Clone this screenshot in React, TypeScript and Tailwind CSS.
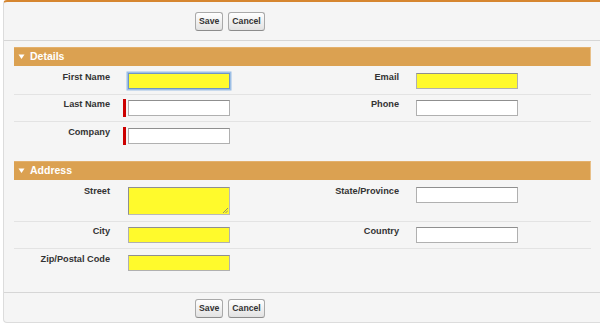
import React from "react";

const font = { fontFamily: '"Liberation Sans", Arial, sans-serif' };

function Btn({ label }: { label: string }) {
  return (
    <button className="h-[19px] px-[3px] rounded-[3px] border border-[#a9a9a9] border-b-[#8c8c8c] bg-gradient-to-b from-white to-[#e2e2e2] text-[8.7px] font-bold text-[#333] leading-none">
      {label}
    </button>
  );
}

function ButtonBar({ top }: { top?: boolean }) {
  return (
    <div
      className={
        top
          ? "flex gap-[5px] pl-[191px] pt-[10px] pb-[9px] border-b border-[#d6d6d6]"
          : "flex gap-[5px] pl-[191px] pt-[6px] pb-[4px] border-t border-[#d6d6d6]"
      }
    >
      <Btn label="Save" />
      <Btn label="Cancel" />
    </div>
  );
}

function SectionHeader({ title }: { title: string }) {
  return (
    <div className="h-[19px] flex items-center gap-[5px] pl-[4px] bg-[#dba151] border-t border-[#e3b06c] border-r border-r-[#e8c08a]">
      <svg width="7" height="6" viewBox="0 0 7 6">
        <path d="M0.5 0.5 L6.5 0.5 L3.5 5 Z" fill="#fff" />
      </svg>
      <span className="text-[10.5px] font-bold text-white">{title}</span>
    </div>
  );
}

type Field = {
  label: string;
  yellow?: boolean;
  required?: boolean;
  focused?: boolean;
  textarea?: boolean;
};

function Input({ f }: { f: Field }) {
  if (f.textarea) {
    return (
      <div className="relative w-[102px] h-[28px] bg-[#fffa2c] border border-[#8f8f8f] border-b-[#b9b9b9] border-r-[#b9b9b9]">
        <svg className="absolute right-[1px] bottom-[1px]" width="6" height="6" viewBox="0 0 6 6">
          <path d="M1 6 L6 1 M3.5 6 L6 3.5" stroke="#777" strokeWidth="0.8" />
        </svg>
      </div>
    );
  }
  return (
    <div
      className={
        "w-[102px] h-[16px] border " +
        (f.yellow ? "bg-[#fffa2c] " : "bg-white ") +
        (f.focused
          ? "border-[#6f95c4] shadow-[0_0_0_1.5px_#9dbfe6]"
          : "border-[#b0b0b0] border-t-[#8f8f8f]")
      }
    />
  );
}

function Cells({ f, right }: { f?: Field; right?: boolean }) {
  if (!f) return <><div /><div /></>;
  return (
    <>
      <div
        className={
          "mt-[-1px] text-right text-[9.2px] font-bold text-[#333] leading-[11px] " +
          (right ? "pr-[7px]" : "pr-[8px]")
        }
      >
        {f.label}
      </div>
      <div className="relative pl-[10px]">
        {f.required && (
          <div className="absolute left-[5px] top-[-1px] w-[3px] h-[18px] bg-[#c00]" />
        )}
        <Input f={f} />
      </div>
    </>
  );
}

function Row({ left, right, pt, pb, last }: { left?: Field; right?: Field; pt: string; pb: string; last?: boolean }) {
  return (
    <div
      className={
        "grid grid-cols-[104px_186px_102px_185px] items-start " +
        pt + " " + pb + (last ? "" : " border-b border-[#e3e3e3]")
      }
    >
      <Cells f={left} />
      <Cells f={right} right />
    </div>
  );
}

export default function App() {
  return (
    <div className="bg-white w-[600px] h-[323px] overflow-hidden" style={font}>
      <div className="ml-[3px] w-[610px] h-[323px] bg-[#f5f5f5] border-t-2 border-t-[#d6862f] border-l border-b border-[#dcdcdc] rounded-[4px]">
        <ButtonBar top />

        <div className="ml-[10px] w-[577px]">
          <div className="mt-[6px]">
            <SectionHeader title="Details" />
            <Row
              pt="pt-[7px]"
              pb="pb-[5px]"
              left={{ label: "First Name", yellow: true, focused: true }}
              right={{ label: "Email", yellow: true }}
            />
            <Row
              pt="pt-[5px]"
              pb="pb-[5px]"
              left={{ label: "Last Name", required: true }}
              right={{ label: "Phone" }}
            />
            <Row pt="pt-[6px]" pb="pb-[5px]" last left={{ label: "Company", required: true }} />
          </div>

          <div className="mt-[12px]">
            <SectionHeader title="Address" />
            <Row
              pt="pt-[7px]"
              pb="pb-[6px]"
              left={{ label: "Street", textarea: true }}
              right={{ label: "State/Province" }}
            />
            <Row
              pt="pt-[5px]"
              pb="pb-[5px]"
              left={{ label: "City", yellow: true }}
              right={{ label: "Country" }}
            />
            <Row pt="pt-[6px]" pb="pb-[5px]" last left={{ label: "Zip/Postal Code", yellow: true }} />
          </div>
        </div>

        <div className="mt-[16px]">
          <ButtonBar />
        </div>
      </div>
    </div>
  );
}
